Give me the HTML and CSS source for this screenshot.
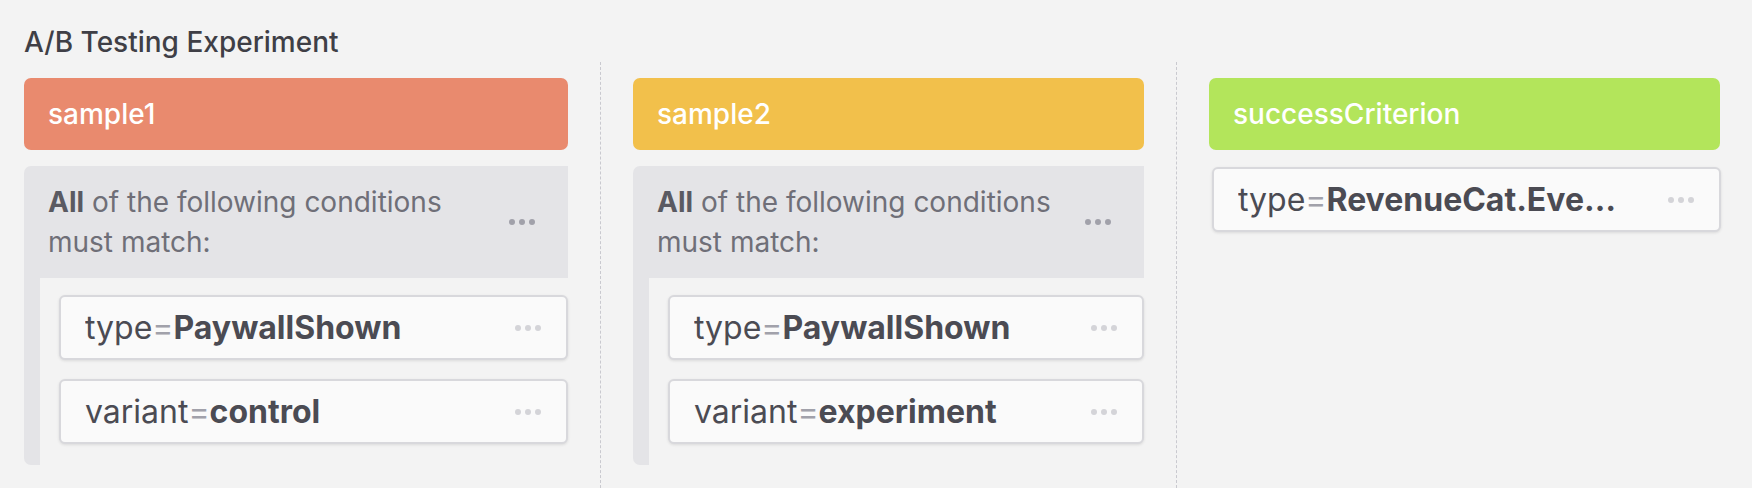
FILE: index.html
```html
<!DOCTYPE html>
<html lang="en">
<head>
<meta charset="utf-8">
<title>A/B Testing Experiment</title>
<link rel="stylesheet" href="styles.css">
</head>
<body>
<div class="page">
  <h1 class="title">A/B Testing Experiment</h1>
  <div class="columns">
    <section class="col">
      <div class="col-head head-red">sample1</div>
      <div class="group">
        <div class="group-head">
          <p class="group-text"><b>All</b> of the following conditions must match:</p>
          <span class="dots dark"><i></i><i></i><i></i></span>
        </div>
        <div class="group-body">
          <div class="card">
            <span class="cond"><span class="key">type</span><span class="eq">=</span><b>PaywallShown</b></span>
            <span class="dots"><i></i><i></i><i></i></span>
          </div>
          <div class="card">
            <span class="cond"><span class="key">variant</span><span class="eq">=</span><b>control</b></span>
            <span class="dots"><i></i><i></i><i></i></span>
          </div>
        </div>
      </div>
    </section>
    <section class="col">
      <div class="col-head head-yellow">sample2</div>
      <div class="group">
        <div class="group-head">
          <p class="group-text"><b>All</b> of the following conditions must match:</p>
          <span class="dots dark"><i></i><i></i><i></i></span>
        </div>
        <div class="group-body">
          <div class="card">
            <span class="cond"><span class="key">type</span><span class="eq">=</span><b>PaywallShown</b></span>
            <span class="dots"><i></i><i></i><i></i></span>
          </div>
          <div class="card">
            <span class="cond"><span class="key">variant</span><span class="eq">=</span><b>experiment</b></span>
            <span class="dots"><i></i><i></i><i></i></span>
          </div>
        </div>
      </div>
    </section>
    <section class="col">
      <div class="col-head head-green">successCriterion</div>
      <div class="card card-solo">
        <span class="cond"><span class="key">type</span><span class="eq">=</span><b>RevenueCat.Eve…</b></span>
        <span class="dots"><i></i><i></i><i></i></span>
      </div>
    </section>
  </div>
</div>
</body>
</html>
```

FILE: styles.css
```css
* { box-sizing: border-box; }

html, body {
  margin: 0;
  padding: 0;
  background: #f3f3f3;
}

body {
  font-family: Inter, "Noto Sans", "Liberation Sans", sans-serif;
  color: #3f3f46;
}

.page {
  height: 100vh;
  display: flex;
  flex-direction: column;
  padding: 23px 0 0 24px;
}

.title {
  margin: 0;
  font-size: 28px;
  line-height: 39px;
  font-weight: 500;
  color: #3f3f46;
}

.columns {
  flex: 1;
  display: grid;
  grid-template-columns: repeat(3, minmax(0, 1fr));
}

.col {
  min-width: 0;
  padding: 16px 32px 0;
  border-left: 1px dashed #c9c9cf;
  display: flex;
  flex-direction: column;
  gap: 16px;
}

.col:first-child {
  padding-left: 0;
  border-left: none;
}

.col-head {
  height: 72px;
  border-radius: 7px;
  padding: 0 24px;
  display: flex;
  align-items: center;
  color: #ffffff;
  font-size: 28px;
  font-weight: 500;
}

.head-red { background: #e98a6e; }
.head-yellow { background: #f2c04b; }
.head-green { background: #b3e55b; }

.group {
  background: #e4e4e7;
  border-radius: 7px 0 0 7px;
}

.group-head {
  display: flex;
  align-items: center;
  gap: 16px;
  padding: 16px 33px 16px 24px;
}

.group-text {
  flex: 1;
  margin: 0;
  font-size: 28px;
  line-height: 40px;
  color: #6f6f78;
}

.group-text b {
  font-weight: 700;
  color: #5a5a62;
}

.group-body {
  margin-left: 16px;
  background: #f3f3f3;
  padding: 17px 0 21px 19px;
  display: flex;
  flex-direction: column;
  gap: 19px;
}

.card {
  height: 65px;
  display: flex;
  align-items: center;
  gap: 16px;
  padding: 0 25px 0 24px;
  background: #fafafa;
  border: 2px solid #d8d8dc;
  border-radius: 6px;
  box-shadow: 0 1px 3px rgba(0, 0, 0, 0.1);
}

.card-solo {
  margin: 1px -1px 0 3px;
}

.cond {
  flex: 1;
  min-width: 0;
  white-space: nowrap;
  overflow: hidden;
  text-overflow: ellipsis;
  font-size: 32px;
  color: #4b4b53;
}

.key { color: #4b4b53; }
.eq { color: #a1a1aa; }
.cond b { font-weight: 700; color: #4b4b53; }

.dots {
  display: flex;
  gap: 4px;
  flex: none;
}

.dots i {
  width: 6px;
  height: 6px;
  border-radius: 50%;
  background: #d4d4d8;
}

.dots.dark i {
  background: #a1a1aa;
}
```
